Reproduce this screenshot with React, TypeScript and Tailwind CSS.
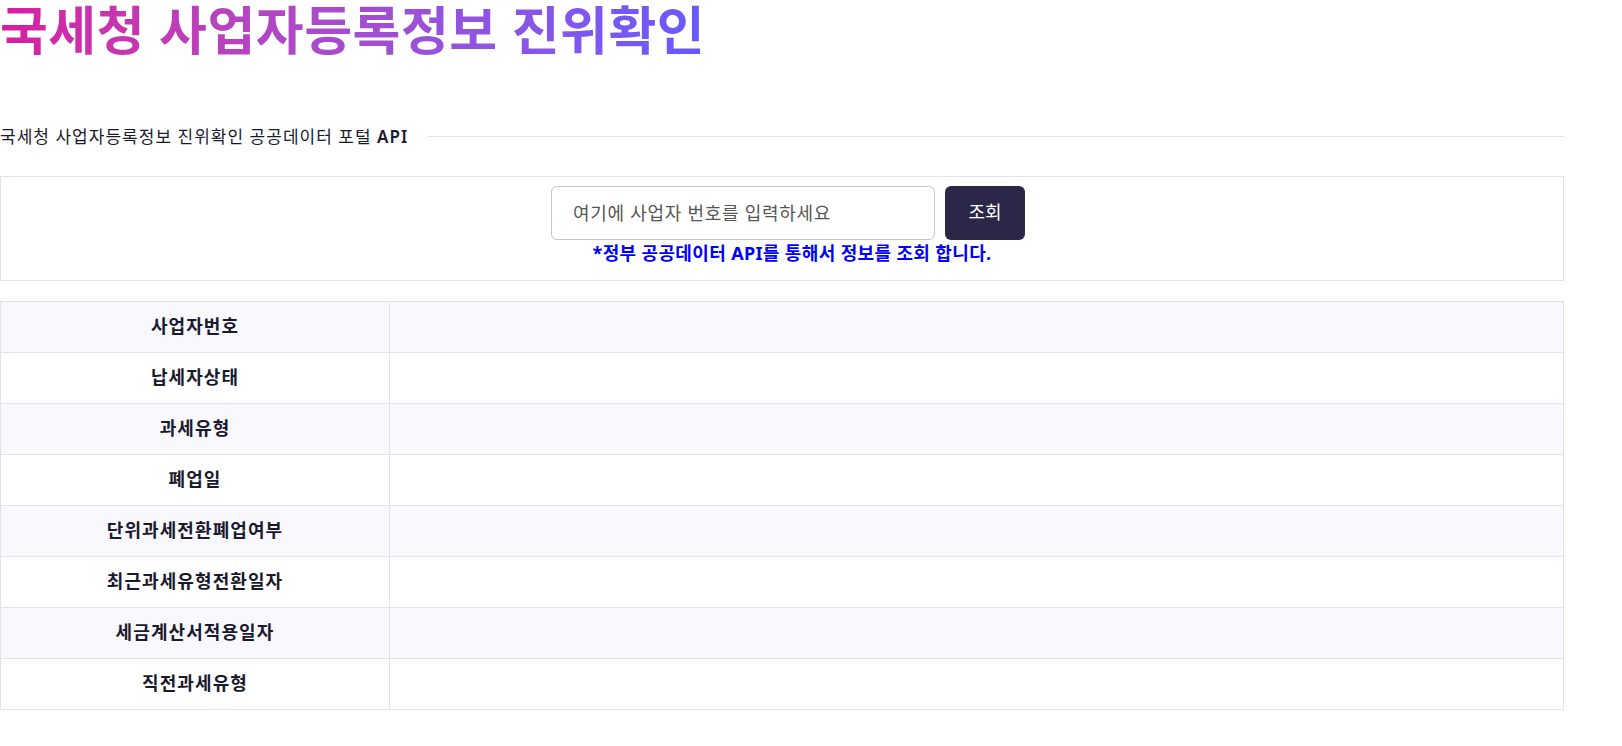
export default function App() {
  const rows = ["사업자번호","납세자상태","과세유형","폐업일","단위과세전환폐업여부","최근과세유형전환일자","세금계산서적용일자","직전과세유형"];
  return (
    <div className="w-[1564px] bg-white text-[#1a1a2e]" style={{fontFamily: '"Noto Sans", "Noto Sans CJK KR", sans-serif'}}>
      <h1 className="text-[52px] font-bold leading-[60px] pr-2 tracking-[0.01em] bg-gradient-to-r from-[#d81aa0] to-[#6659ff] bg-clip-text text-transparent w-fit">국세청 사업자등록정보 진위확인</h1>
      <div className="flex items-center mt-[64px] gap-5">
        <span className="text-[17px] tracking-[0.06em] whitespace-nowrap">국세청 사업자등록정보 진위확인 공공데이터 포털 <b className="font-semibold">API</b></span>
        <div className="flex-1 h-px bg-[#e2e2ec]" />
      </div>
      <div className="mt-[26px] border border-[#e2e2ec] h-[105px] flex flex-col items-center pt-[9px]">
        <div className="flex gap-[10px] ml-[12px]">
          <input placeholder="여기에 사업자 번호를 입력하세요" className="w-[384px] h-[54px] border border-[#c4c4cc] rounded-[6px] px-[21px] text-[18px] tracking-[0.04em] placeholder:text-[#555]" />
          <button className="w-[80px] h-[54px] bg-[#2b2748] text-white rounded-[6px] text-[18px]">조회</button>
        </div>
        <div className="text-[#0000ff] font-bold text-[18px] tracking-[0.02em] leading-[24px] mt-[1px] ml-[20px]">*정부 공공데이터 API를 통해서 정보를 조회 합니다.</div>
      </div>
      <div className="mt-[20px] border-t border-x border-[#e2e2ec]">
        {rows.map((r, i) => (
          <div key={r} className={`flex h-[51px] border-b border-[#e2e2ec] ${i % 2 === 0 ? "bg-[#f9f8fd]" : "bg-white"}`}>
            <div className="w-[389px] border-r border-[#e2e2ec] flex items-center justify-center font-semibold text-[18px] tracking-[0.06em]">{r}</div>
            <div className="flex-1" />
          </div>
        ))}
      </div>
    </div>
  );
}
